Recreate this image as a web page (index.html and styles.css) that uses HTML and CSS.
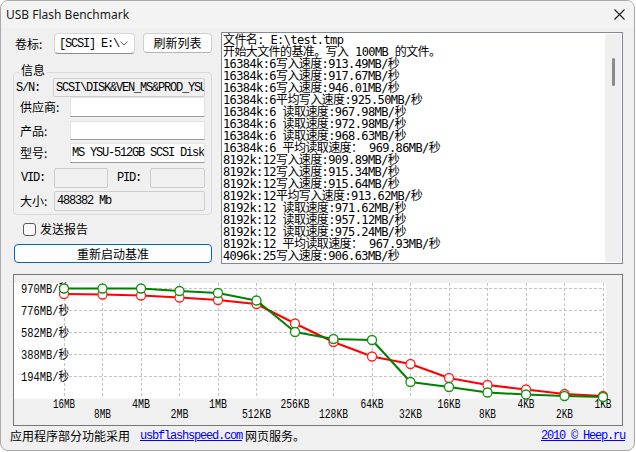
FILE: index.html
```html
<!DOCTYPE html>
<html lang="zh-CN">
<head>
<meta charset="utf-8">
<title>USB Flash Benchmark</title>
<link rel="stylesheet" href="styles.css">
</head>
<body>
<div class="window">
  <header class="titlebar">
    <span class="title">USB Flash Benchmark</span>
    <svg class="close" width="11" height="11" viewBox="0 0 11 11"><path d="M0.5 0.5L10.5 10.5M10.5 0.5L0.5 10.5" stroke="#1b1b1b" stroke-width="1.1" fill="none"/></svg>
  </header>
  <main class="content">
    <section class="top">
      <div class="left">
        <div class="volrow">
          <span class="vol-lbl">卷标:</span>
          <div class="combo">
            <span class="mono">[SCSI] E:\</span>
            <svg class="chev" width="8" height="5" viewBox="0 0 8 5"><path d="M0.5 0.5L4 4L7.5 0.5" fill="none" stroke="#606060" stroke-width="1"/></svg>
          </div>
          <button class="btn refresh">刷新列表</button>
        </div>
        <fieldset class="info">
          <legend>信息</legend>
          <div class="frow r1"><span class="flabel mono l-sn">S/N:</span><div class="field ro mono f-sn">SCSI\DISK&amp;VEN_MS&amp;PROD_YSU-512GB</div></div>
          <div class="frow r2"><span class="flabel l-wide">供应商:</span><div class="field wh f-wide"></div></div>
          <div class="frow r3"><span class="flabel l-wide">产品:</span><div class="field wh f-wide"></div></div>
          <div class="frow r4"><span class="flabel l-wide">型号:</span><div class="field wh mono f-wide model">MS YSU-512GB SCSI Disk</div></div>
          <div class="frow r5"><span class="flabel mono l-vid">VID:</span><div class="field ro f-vid"></div><span class="flabel mono l-pid">PID:</span><div class="field ro f-pid"></div></div>
          <div class="frow r6"><span class="flabel l-size">大小:</span><div class="field ro mono f-size">488382 Mb</div></div>
        </fieldset>
        <label class="check"><span class="box"></span><span>发送报告</span></label>
        <button class="btn primary">重新启动基准</button>
      </div>
      <div class="log">
        <div class="log-text">
          <div class="ln">文件名: E:\test.tmp</div>
          <div class="ln">开始大文件的基准。写入 100MB 的文件。</div>
          <div class="ln">16384k:6写入速度:913.49MB/秒</div>
          <div class="ln">16384k:6写入速度:917.67MB/秒</div>
          <div class="ln">16384k:6写入速度:946.01MB/秒</div>
          <div class="ln">16384k:6平均写入速度:925.50MB/秒</div>
          <div class="ln">16384k:6 读取速度:967.98MB/秒</div>
          <div class="ln">16384k:6 读取速度:972.98MB/秒</div>
          <div class="ln">16384k:6 读取速度:968.63MB/秒</div>
          <div class="ln">16384k:6 平均读取速度： 969.86MB/秒</div>
          <div class="ln">8192k:12写入速度:909.89MB/秒</div>
          <div class="ln">8192k:12写入速度:915.34MB/秒</div>
          <div class="ln">8192k:12写入速度:915.64MB/秒</div>
          <div class="ln">8192k:12平均写入速度:913.62MB/秒</div>
          <div class="ln">8192k:12 读取速度:971.62MB/秒</div>
          <div class="ln">8192k:12 读取速度:957.12MB/秒</div>
          <div class="ln">8192k:12 读取速度:975.24MB/秒</div>
          <div class="ln">8192k:12 平均读取速度： 967.93MB/秒</div>
          <div class="ln">4096k:25写入速度:906.63MB/秒</div>
        </div>
        <div class="scrollbar"><div class="thumb"></div></div>
      </div>
    </section>
    <section class="chart">
      <svg class="plot" width="608" height="150" viewBox="14 275 608 150">
        <rect x="14" y="283" width="592" height="115.5" fill="#ffffff"/>
        <g stroke="#c4c4c4" stroke-width="1" stroke-dasharray="3 2" fill="none">
          <path d="M64.5 283V398M102.5 283V398M141.5 283V398M179.5 283V398M218.5 283V398M256.5 283V398M295.5 283V398M333.5 283V398M372.5 283V398M410.5 283V398M449.5 283V398M487.5 283V398M526.5 283V398M564.5 283V398M603.5 283V398"/>
          <path d="M64 288.5H604M64 310.5H604M64 332.5H604M64 354.5H604M64 376.5H604"/>
        </g>
        <g class="ylab" font-size="12.5">
          <text x="21" y="293" textLength="48" lengthAdjust="spacingAndGlyphs">970MB/秒</text>
          <text x="21" y="315" textLength="48" lengthAdjust="spacingAndGlyphs">776MB/秒</text>
          <text x="21" y="337" textLength="48" lengthAdjust="spacingAndGlyphs">582MB/秒</text>
          <text x="21" y="359" textLength="48" lengthAdjust="spacingAndGlyphs">388MB/秒</text>
          <text x="21" y="381" textLength="48" lengthAdjust="spacingAndGlyphs">194MB/秒</text>
        </g>
        <g class="xlab" font-size="12" text-anchor="middle">
          <text x="64" y="408" textLength="22" lengthAdjust="spacingAndGlyphs">16MB</text>
          <text x="102.5" y="418" textLength="17" lengthAdjust="spacingAndGlyphs">8MB</text>
          <text x="141" y="408" textLength="18" lengthAdjust="spacingAndGlyphs">4MB</text>
          <text x="179.5" y="418" textLength="18" lengthAdjust="spacingAndGlyphs">2MB</text>
          <text x="218" y="408" textLength="18" lengthAdjust="spacingAndGlyphs">1MB</text>
          <text x="256.5" y="418" textLength="29" lengthAdjust="spacingAndGlyphs">512KB</text>
          <text x="295" y="408" textLength="29" lengthAdjust="spacingAndGlyphs">256KB</text>
          <text x="333.5" y="418" textLength="29" lengthAdjust="spacingAndGlyphs">128KB</text>
          <text x="372" y="408" textLength="23" lengthAdjust="spacingAndGlyphs">64KB</text>
          <text x="410.5" y="418" textLength="23" lengthAdjust="spacingAndGlyphs">32KB</text>
          <text x="449" y="408" textLength="23" lengthAdjust="spacingAndGlyphs">16KB</text>
          <text x="487.5" y="418" textLength="17" lengthAdjust="spacingAndGlyphs">8KB</text>
          <text x="526" y="408" textLength="17" lengthAdjust="spacingAndGlyphs">4KB</text>
          <text x="564.5" y="418" textLength="17" lengthAdjust="spacingAndGlyphs">2KB</text>
          <text x="603" y="408" textLength="17" lengthAdjust="spacingAndGlyphs">1KB</text>
        </g>
        <polyline fill="none" stroke="#ff0000" stroke-width="2" stroke-linejoin="round" points="64,294 102.5,294.5 141,295.5 179.5,297.5 218,300 256.5,304 295,323.5 333.5,342 372,356.5 410.5,364 449,378 487.5,385 526,389.5 564.5,394 603,396"/>
        <g fill="#ffffff" stroke="#ff2020" stroke-width="1.3">
          <circle cx="64" cy="294" r="4.5"/><circle cx="102.5" cy="294.5" r="4.5"/><circle cx="141" cy="295.5" r="4.5"/><circle cx="179.5" cy="297.5" r="4.5"/><circle cx="218" cy="300" r="4.5"/><circle cx="256.5" cy="304" r="4.5"/><circle cx="295" cy="323.5" r="4.5"/><circle cx="333.5" cy="342" r="4.5"/><circle cx="372" cy="356.5" r="4.5"/><circle cx="410.5" cy="364" r="4.5"/><circle cx="449" cy="378" r="4.5"/><circle cx="487.5" cy="385" r="4.5"/><circle cx="526" cy="389.5" r="4.5"/><circle cx="564.5" cy="394" r="4.5"/><circle cx="603" cy="396" r="4.5"/>
        </g>
        <polyline fill="none" stroke="#008000" stroke-width="2" stroke-linejoin="round" points="64,288.5 102.5,288.5 141,288.5 179.5,291 218,293 256.5,300.5 295,332 333.5,339 372,340 410.5,382 449,387 487.5,392.5 526,394.5 564.5,396 603,397"/>
        <g fill="#ffffff" stroke="#129012" stroke-width="1.3">
          <circle cx="64" cy="288.5" r="4.5"/><circle cx="102.5" cy="288.5" r="4.5"/><circle cx="141" cy="288.5" r="4.5"/><circle cx="179.5" cy="291" r="4.5"/><circle cx="218" cy="293" r="4.5"/><circle cx="256.5" cy="300.5" r="4.5"/><circle cx="295" cy="332" r="4.5"/><circle cx="333.5" cy="339" r="4.5"/><circle cx="372" cy="340" r="4.5"/><circle cx="410.5" cy="382" r="4.5"/><circle cx="449" cy="387" r="4.5"/><circle cx="487.5" cy="392.5" r="4.5"/><circle cx="526" cy="394.5" r="4.5"/><circle cx="564.5" cy="396" r="4.5"/><circle cx="603" cy="397" r="4.5"/>
        </g>
      </svg>
    </section>
    <footer class="footer">
      <div class="credit"><span>应用程序部分功能采用</span><a class="link mono" href="#">usbflashspeed.com</a><span>网页服务。</span></div>
      <a class="link mono copy" href="#">2010 © Heep.ru</a>
    </footer>
  </main>
</div>
</body>
</html>
```

FILE: styles.css
```css
* { box-sizing: border-box; }
html, body { margin: 0; padding: 0; background: #ffffff; }
body {
  width: 636px; height: 452px; overflow: hidden;
  font-family: "Noto Sans CJK SC", "Noto Sans", sans-serif;
  font-size: 12px; color: #000;
}
.mono {
  font-family: "Liberation Mono", "Noto Sans CJK SC", monospace;
  font-size: 12px; letter-spacing: -1.2px;
}
.window {
  width: 635px; height: 451px;
  border: 1px solid #a9a9a9; border-radius: 8px;
  background: #f0f0f0; overflow: hidden;
  display: flex; flex-direction: column;
}
.titlebar {
  height: 27px; flex: none;
  display: flex; align-items: center; justify-content: space-between;
  padding: 0 9px 0 5px; background: #f3f3f3;
}
.title { font-family: "Noto Sans", sans-serif; font-size: 12px; color: #1a1a1a; }
.close { display: block; }
.content { flex: 1; display: flex; flex-direction: column; padding: 4px 11px 0 12px; }
.top { display: flex; gap: 9px; height: 232px; }
.left { width: 199px; display: flex; flex-direction: column; }
.volrow { margin-top: 1px; height: 21px; display: flex; align-items: center; }
.vol-lbl { width: 41px; padding-left: 2px; line-height: 1; }
.combo {
  width: 81px; height: 21px; display: flex; align-items: center; justify-content: space-between;
  padding: 0 6px 0 4px; background: #fdfdfd;
  border: 1px solid #d6d6d6; border-bottom-color: #8c8c8c; border-radius: 4px;
}
.chev { display: block; }
.btn {
  font-family: "Noto Sans CJK SC", sans-serif; font-size: 12px; color: #000;
  background: #fdfdfd; border: 1px solid #d0d0d0; border-bottom-color: #b4b4b4;
  border-radius: 4px; padding: 0; line-height: 1;
}
.refresh { margin-left: 8px; width: 69px; height: 20px; align-self: flex-start; }
.info {
  margin: 9px 0 0 0; padding: 0 6px 3px 0; min-width: 0;
  border: 1px solid #d9d9d9; border-radius: 4px;
}
.info legend { margin-left: 5px; padding: 0 2px 4px; line-height: 14px; font-size: 12px; }
.frow { display: flex; align-items: center; line-height: 1; }
.r1 { height: 19px; margin-top: -3px; }
.r2 { height: 20px; }
.r3 { height: 19px; margin-top: 4px; }
.r4 { height: 20px; margin-top: 3px; }
.r5 { height: 20px; margin-top: 5px; }
.r6 { height: 20px; margin-top: 3px; }
.flabel { flex: none; white-space: nowrap; }
.l-sn { width: 39px; padding-left: 2px; }
.l-wide { width: 56px; padding-left: 6px; }
.l-vid { width: 40px; padding-left: 7px; }
.l-pid { width: 33px; margin-left: 9px; }
.l-size { width: 40px; padding-left: 6px; }
.field {
  height: 100%; display: flex; align-items: center; overflow: hidden; white-space: nowrap;
  padding-left: 2px;
}
.ro { background: #f0f0f0; border: 1px solid #cdcdcd; border-radius: 2px; }
.wh { background: #ffffff; border: 1px solid #e3e3e3; border-bottom-color: #9a9a9a; }
.f-sn { width: 152px; }
.f-wide { width: 135px; }
.model { padding-left: 1px; }
.f-vid { width: 54px; }
.f-pid { width: 55px; }
.f-size { width: 151px; }
.check { margin-top: 7px; height: 14px; display: flex; align-items: center; gap: 4px; padding-left: 10px; line-height: 1; }
.box { width: 13px; height: 13px; border: 1px solid #5a5a5a; border-radius: 3px; background: #f9f9f9; }
.primary { margin: 8px 0 0 1px; width: 198px; height: 19px; border-color: #0067c0; }
.log {
  width: 402px; height: 232px; display: flex;
  background: #ffffff; border: 1px solid #848890;
}
.log-text {
  flex: 1; padding: 1px 0 0 1px; overflow: hidden;
  font-family: "DejaVu Sans Mono", "Noto Sans CJK SC", monospace;
  font-size: 12px; letter-spacing: -0.6px; line-height: 12px; color: #000;
}
.ln { white-space: pre; height: 12px; }
.scrollbar { width: 16px; margin: 1px 1px 1px 0; background: #efefef; padding: 24px 0 0 7px; }
.thumb { width: 3px; height: 28px; background: #8a8a8a; border-radius: 2px; }
.chart { margin-top: 10px; width: 610px; height: 152px; border: 1px solid #777777; }
.plot { display: block; }
.ylab, .xlab { font-family: "Liberation Mono", "Noto Sans CJK SC", monospace; fill: #000; }
.footer {
  height: 20px; display: flex; align-items: center; justify-content: space-between;
  margin: 0 -2px 0 -3px; line-height: 1;
}
.credit { display: flex; align-items: center; }
.link { color: #0000ff; text-decoration: underline; margin: 0 3px 0 10px; }
.copy { margin: 0; }
```
